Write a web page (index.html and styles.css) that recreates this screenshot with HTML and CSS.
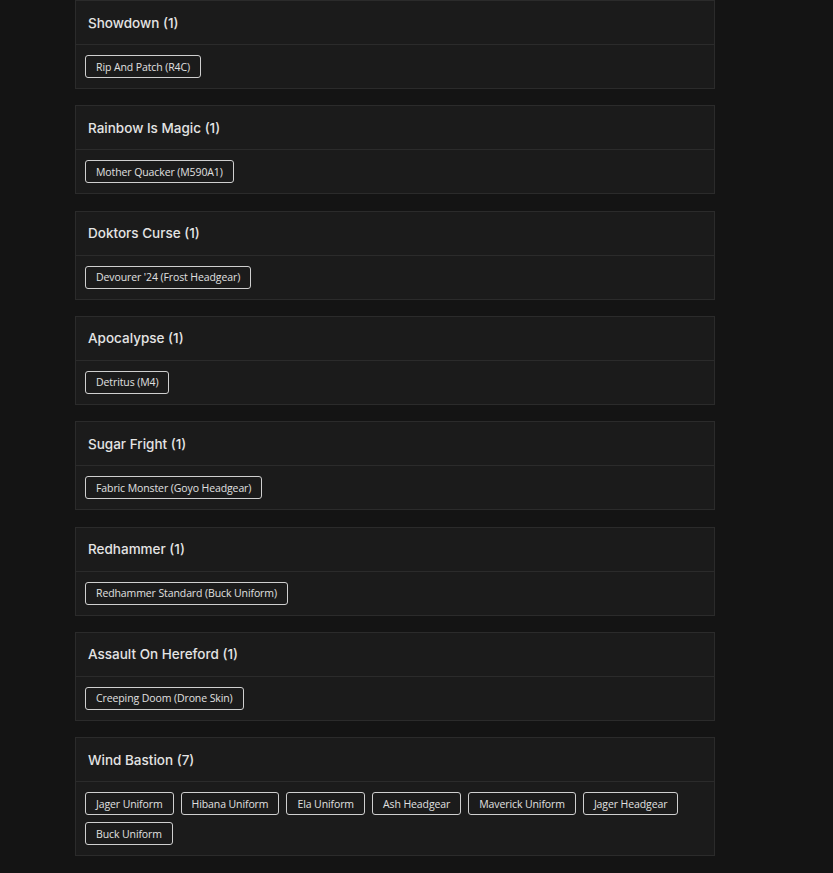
FILE: index.html
```html
<!DOCTYPE html>
<html>
<head>
<meta charset="utf-8">
<link rel="stylesheet" href="styles.css">
</head>
<body>
<div class="list">
  <section class="card">
    <div class="card-head">Showdown (1)</div>
    <div class="card-body"><span class="tag">Rip And Patch (R4C)</span></div>
  </section>
  <section class="card">
    <div class="card-head">Rainbow Is Magic (1)</div>
    <div class="card-body"><span class="tag">Mother Quacker (M590A1)</span></div>
  </section>
  <section class="card">
    <div class="card-head">Doktors Curse (1)</div>
    <div class="card-body"><span class="tag">Devourer '24 (Frost Headgear)</span></div>
  </section>
  <section class="card">
    <div class="card-head">Apocalypse (1)</div>
    <div class="card-body"><span class="tag">Detritus (M4)</span></div>
  </section>
  <section class="card">
    <div class="card-head">Sugar Fright (1)</div>
    <div class="card-body"><span class="tag">Fabric Monster (Goyo Headgear)</span></div>
  </section>
  <section class="card">
    <div class="card-head">Redhammer (1)</div>
    <div class="card-body"><span class="tag">Redhammer Standard (Buck Uniform)</span></div>
  </section>
  <section class="card">
    <div class="card-head">Assault On Hereford (1)</div>
    <div class="card-body"><span class="tag">Creeping Doom (Drone Skin)</span></div>
  </section>
  <section class="card">
    <div class="card-head">Wind Bastion (7)</div>
    <div class="card-body">
      <span class="tag">Jager Uniform</span>
      <span class="tag">Hibana Uniform</span>
      <span class="tag">Ela Uniform</span>
      <span class="tag">Ash Headgear</span>
      <span class="tag">Maverick Uniform</span>
      <span class="tag">Jager Headgear</span>
      <span class="tag">Buck Uniform</span>
    </div>
  </section>
</div>
</body>
</html>
```
FILE: styles.css
```css
html, body {
  margin: 0;
  padding: 0;
  background: #141414;
  font-family: "Open Sans", "Liberation Sans", sans-serif;
  color: #e2e2e2;
}
.list {
  width: 640px;
  margin-left: 75px;
  display: flex;
  flex-direction: column;
  gap: 16.33px;
  padding-bottom: 20px;
}
.card {
  background: #1b1b1b;
  border: 1px solid #2b2b2b;
}
.card-head {
  height: 43px;
  display: flex;
  align-items: center;
  padding: 0 12px;
  border-bottom: 1px solid #2b2b2b;
  font-family: Inter, "Open Sans", sans-serif;
  font-size: 13.5px;
  font-weight: 500;
  color: #e4e4e4;
}
.card-body {
  padding: 10px 9px;
  display: flex;
  flex-wrap: wrap;
  gap: 7px;
}
.tag {
  height: 21px;
  display: inline-flex;
  align-items: center;
  padding: 0 10px;
  border: 1px solid #cfcfcf;
  border-radius: 3px;
  font-size: 10.5px;
  letter-spacing: -0.1px;
  color: #e0e0e0;
}
```
